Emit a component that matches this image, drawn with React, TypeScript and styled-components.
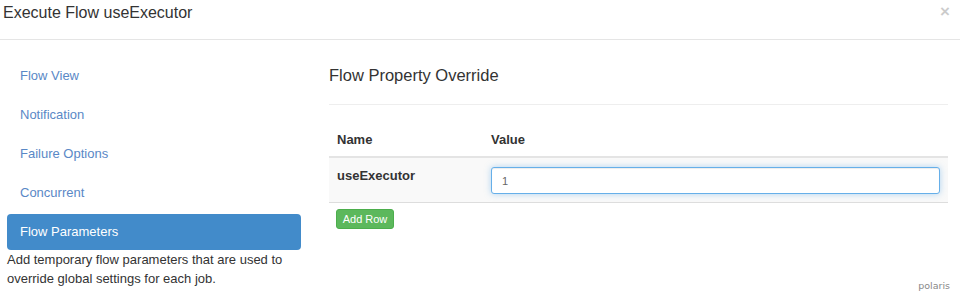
import React from "react";
import styled, { createGlobalStyle } from "styled-components";

const Global = createGlobalStyle`
  html, body { margin: 0; padding: 0; background: #fff; }
  body { font-family: "Liberation Sans", Arial, sans-serif; color: #333; width: 960px; height: 300px; overflow: hidden; }
  * { box-sizing: border-box; }
`;

const Modal = styled.div`
  position: relative;
  width: 960px;
  height: 300px;
`;

const Header = styled.div`
  height: 40px;
  border-bottom: 1px solid #e5e5e5;
  display: flex;
  justify-content: space-between;
  align-items: flex-start;
  padding: 4px 10px 0 3px;
`;

const Title = styled.h4`
  margin: 0;
  font-size: 16px;
  line-height: 18px;
  font-weight: normal;
  color: #333;
`;

const Close = styled.span`
  font-size: 17px;
  font-weight: bold;
  line-height: 14px;
  margin-top: 1px;
  color: #000;
  opacity: 0.2;
`;

const Body = styled.div`
  display: flex;
  padding: 18px 12px 0 7px;
  gap: 28px;
`;

const Side = styled.div`
  width: 294px;
  flex: none;
`;

const Nav = styled.ul`
  list-style: none;
  margin: 0;
  padding: 0;
  display: flex;
  flex-direction: column;
  gap: 3px;
`;

const NavItem = styled.li<{ $active?: boolean }>`
  height: 36px;
  line-height: 36px;
  padding: 0 13px;
  font-size: 13px;
  border-radius: 4px;
  color: ${(p) => (p.$active ? "#fff" : "#5a88c6")};
  background: ${(p) => (p.$active ? "#428bca" : "transparent")};
`;

const Help = styled.p`
  margin: 0;
  font-size: 13px;
  line-height: 19px;
  color: #333;
`;

const Main = styled.div`
  flex: 1;
`;

const SectionTitle = styled.h3`
  margin: 0;
  padding-top: 8px;
  height: 47px;
  font-size: 16.5px;
  line-height: 18px;
  font-weight: normal;
  color: #333;
  border-bottom: 1px solid #eee;
`;

const Table = styled.table`
  margin-top: 16px;
  width: 100%;
  border-collapse: collapse;
  font-size: 13px;
`;

const Th = styled.th<{ $w?: number }>`
  text-align: left;
  font-weight: bold;
  padding: 10px 8px 7px;
  line-height: 18px;
  border-bottom: 2px solid #e4e4e4;
  width: ${(p) => (p.$w ? `${p.$w}px` : "auto")};
`;

const Tr = styled.tr`
  background: #f9f9f9;
  border-bottom: 1px solid #ddd;
`;

const Td = styled.td<{ $bold?: boolean }>`
  padding: 9px 8px 8px;
  vertical-align: top;
  line-height: 18px;
  font-weight: ${(p) => (p.$bold ? "bold" : "normal")};
`;

const Input = styled.input`
  display: block;
  width: 100%;
  height: 27px;
  padding: 0 10px;
  font-family: "Liberation Sans", Arial, sans-serif;
  font-size: 11px;
  color: #666;
  background: #fff;
  border: 1px solid #66afe9;
  border-radius: 3px;
  outline: none;
  box-shadow: inset 0 1px 1px rgba(0,0,0,.075), 0 0 6px rgba(102,175,233,.5);
`;

const AddButton = styled.button`
  margin: 6px 0 0 7px;
  height: 20px;
  width: 58px;
  padding: 0;
  font-family: "Liberation Sans", Arial, sans-serif;
  font-size: 11px;
  color: #fff;
  background: #5cb85c;
  border: 1px solid #4cae4c;
  border-radius: 3px;
`;

const Watermark = styled.span`
  position: absolute;
  right: 10px;
  bottom: 9px;
  font-family: "DejaVu Sans", sans-serif;
  font-size: 9.5px;
  color: #888;
`;

export default function App() {
  return (
    <Modal>
      <Global />
      <Header>
        <Title>Execute Flow useExecutor</Title>
        <Close>×</Close>
      </Header>
      <Body>
        <Side>
          <Nav>
            <NavItem>Flow View</NavItem>
            <NavItem>Notification</NavItem>
            <NavItem>Failure Options</NavItem>
            <NavItem>Concurrent</NavItem>
            <NavItem $active>Flow Parameters</NavItem>
          </Nav>
          <Help>
            Add temporary flow parameters that are used to override global settings for each job.
          </Help>
        </Side>
        <Main>
          <SectionTitle>Flow Property Override</SectionTitle>
          <Table>
            <thead>
              <tr>
                <Th $w={154}>Name</Th>
                <Th>Value</Th>
              </tr>
            </thead>
            <tbody>
              <Tr>
                <Td $bold>useExecutor</Td>
                <Td>
                  <Input defaultValue="1" />
                </Td>
              </Tr>
            </tbody>
          </Table>
          <AddButton>Add Row</AddButton>
        </Main>
      </Body>
      <Watermark>polaris</Watermark>
    </Modal>
  );
}
